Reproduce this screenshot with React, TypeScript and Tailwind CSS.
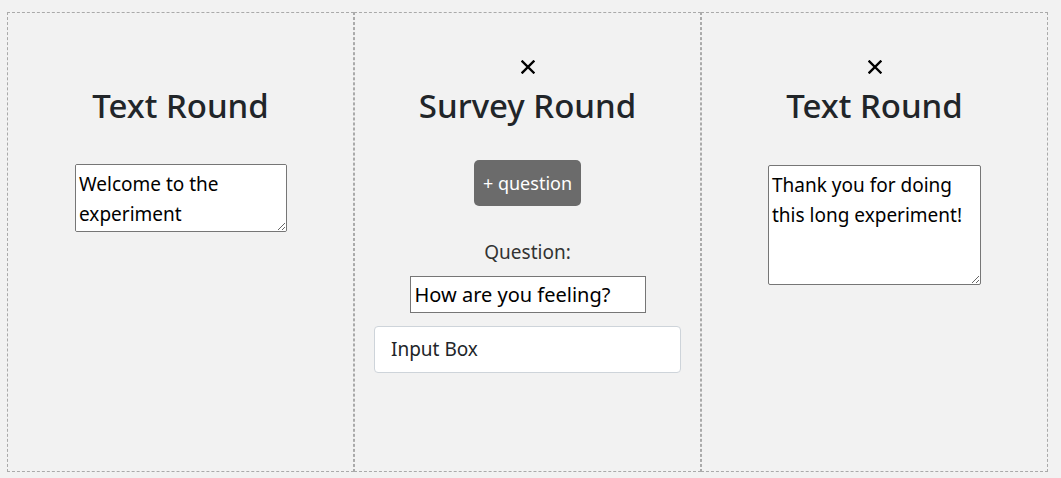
import React from 'react';

const font = { fontFamily: '"Noto Sans", "Open Sans", sans-serif' };

const CloseMark: React.FC<{ hidden?: boolean }> = ({ hidden }) => (
  <div className={hidden ? 'invisible h-6 flex items-center' : 'h-6 flex items-center'}>
    <svg width="14" height="14" viewBox="0 0 14 14">
      <path d="M1.5 1.5 L12.5 12.5 M12.5 1.5 L1.5 12.5" stroke="#000" strokeWidth="2.4" strokeLinecap="square" />
    </svg>
  </div>
);

const Heading: React.FC<{ children: React.ReactNode }> = ({ children }) => (
  <h2 className="mt-2 text-[33px] leading-[38px] font-medium text-[#212529]">{children}</h2>
);

export default function App() {
  return (
    <div className="w-[1061px] h-[478px] bg-[#f2f2f2] pt-3 pl-[7px] text-[#212529]" style={font}>
      <div className="flex">
        <div className="w-[347px] h-[460px] border border-dashed border-[#aaa] flex flex-col items-center pt-[42px]">
          <CloseMark hidden />
          <Heading>Text Round</Heading>
          <textarea
            className="mt-[39px] ml-[1px] w-[212px] h-[68px] bg-white border border-[#767676] rounded-[2px] px-[3px] py-[4px] text-[19px] leading-[30px] text-black resize-y outline-none"
            defaultValue="Welcome to the experiment"
          />
        </div>
        <div className="w-[347px] h-[460px] border border-dashed border-[#aaa] flex flex-col items-center pt-[42px]">
          <CloseMark />
          <Heading>Survey Round</Heading>
          <button className="mt-[35px] h-[46px] w-[107px] rounded-[5px] bg-[#6b6b6b] text-white text-[18px]">
            + question
          </button>
          <div className="mt-[31px] text-[19px] leading-[30px] text-[#333]">Question:</div>
          <input
            className="mt-[9px] w-[236px] h-[37px] bg-white border border-[#767676] px-[4px] text-[20px] text-black outline-none"
            defaultValue="How are you feeling?"
          />
          <div className="mt-[13px] w-[307px] h-[47px] bg-white border border-[#ced4da] rounded-[4px] flex items-center px-4 text-[19px] text-[#212529]">
            Input Box
          </div>
        </div>
        <div className="w-[347px] h-[460px] border border-dashed border-[#aaa] flex flex-col items-center pt-[42px]">
          <CloseMark />
          <Heading>Text Round</Heading>
          <textarea
            className="mt-[40px] w-[213px] h-[120px] bg-white border border-[#767676] rounded-[2px] px-[3px] py-[4px] text-[19px] leading-[30px] text-black resize-y outline-none"
            defaultValue="Thank you for doing this long experiment!"
          />
        </div>
      </div>
    </div>
  );
}
